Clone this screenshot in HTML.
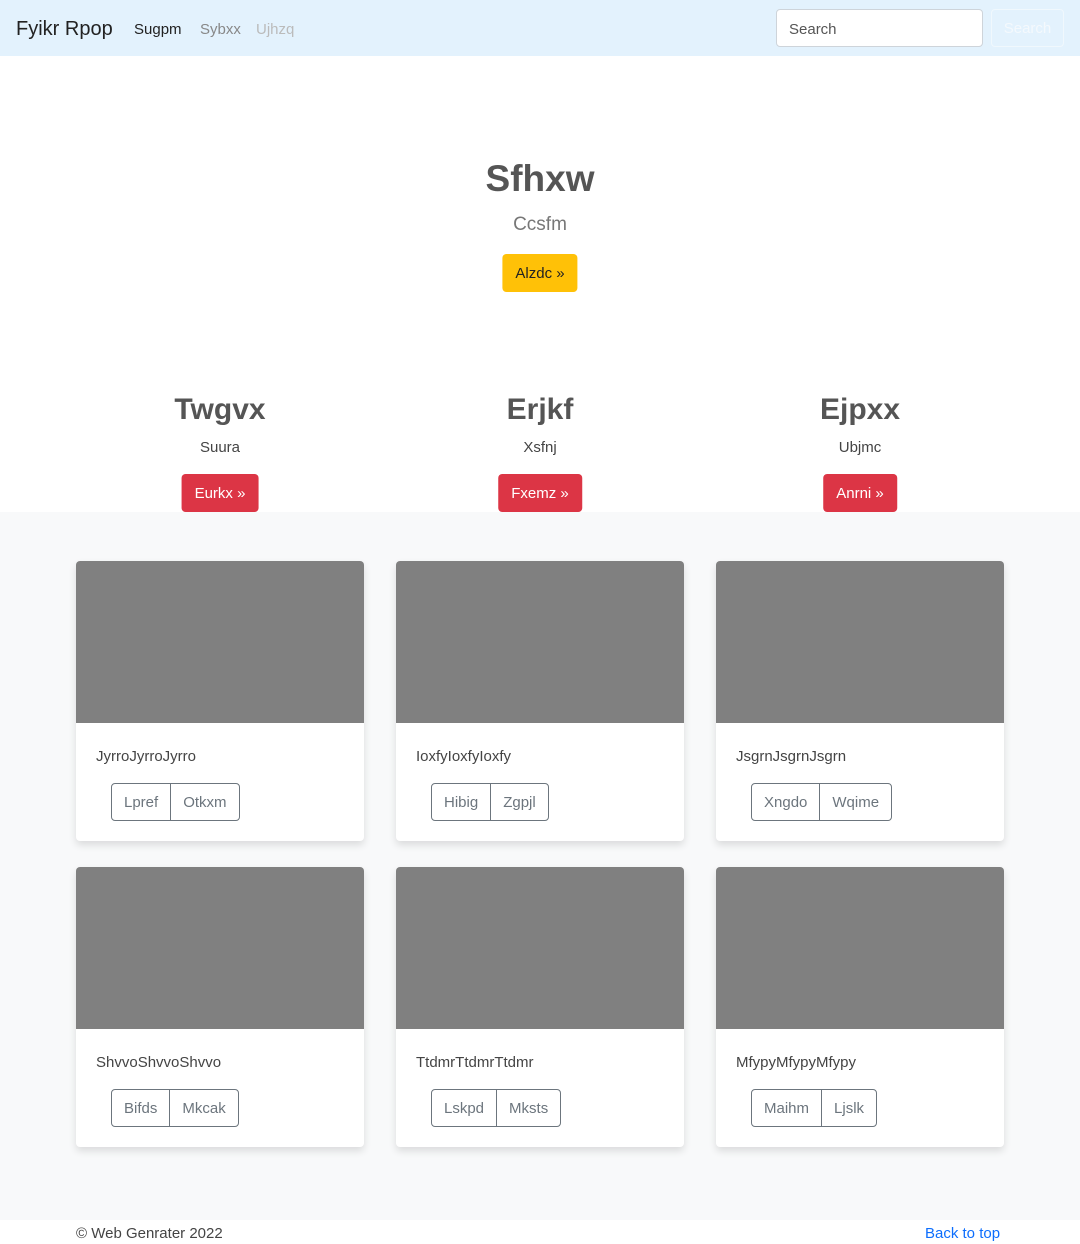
<!DOCTYPE html>
<html><head><style>
*{box-sizing:border-box;margin:0;padding:0}
body{width:1080px;height:1244px;font-family:"Liberation Sans",sans-serif;color:#212529;background:#fff;position:relative;overflow:hidden}
.nav{position:absolute;left:0;top:0;width:1080px;height:56px;background:#e3f2fd}
.abs{position:absolute;white-space:nowrap}
.c{position:absolute;transform:translateX(-50%);white-space:nowrap;text-align:center}
.btn{position:absolute;transform:translateX(-50%);height:38px;line-height:40px;padding:0 13px;border-radius:4px;font-size:15px;white-space:nowrap}
.red{background:#dc3545;color:#fff}
.gray{position:absolute;left:0;top:512px;width:1080px;height:708px;background:#f8f9fa}
.card{position:absolute;width:288px;height:280px;background:#fff;border-radius:4px;box-shadow:0 4px 8px rgba(0,0,0,.12);overflow:hidden}
.card .img{height:162px;background:#808080}
.card .t{position:absolute;left:20px;top:187px;font-size:15px;color:#444}
.grp{position:absolute;left:35px;top:222px;display:flex;border:1px solid #6c757d;border-radius:4px;height:38px}
.grp span{padding:0 12px;line-height:38px;font-size:15px;color:#6c757d}
.grp span+span{border-left:1px solid #6c757d}
</style></head><body>
<div class="nav"></div>
<div class="abs" style="left:16px;top:18px;font-size:20px;color:#222">Fyikr Rpop</div>
<div class="abs" style="left:134px;top:21px;font-size:15px;color:#222">Sugpm</div>
<div class="abs" style="left:200px;top:21px;font-size:15px;color:#888">Sybxx</div>
<div class="abs" style="left:256px;top:21px;font-size:15px;color:#bbb">Ujhzq</div>
<div class="abs" style="left:776px;top:9px;width:207px;height:38px;background:#fff;border:1px solid #ced4da;border-radius:4px;padding:0 12px;line-height:39px;font-size:15px;color:#555">Search</div>
<div class="abs" style="left:991px;top:9px;width:73px;height:38px;border:1px solid #f0f8fd;border-radius:4px;line-height:38px;text-align:center;font-size:15px;color:#f4f9fd">Search</div>

<div class="c" style="left:540px;top:158px;font-size:37px;font-weight:bold;color:#555">Sfhxw</div>
<div class="c" style="left:540px;top:214px;font-size:19px;color:#777">Ccsfm</div>
<div class="btn" style="left:540px;top:254px;background:#ffc107;color:#222">Alzdc »</div>

<div class="c" style="left:220px;top:393px;font-size:30px;font-weight:bold;color:#555">Twgvx</div>
<div class="c" style="left:540px;top:393px;font-size:30px;font-weight:bold;color:#555">Erjkf</div>
<div class="c" style="left:860px;top:393px;font-size:30px;font-weight:bold;color:#555">Ejpxx</div>
<div class="c" style="left:220px;top:439px;font-size:15px;color:#444">Suura</div>
<div class="c" style="left:540px;top:439px;font-size:15px;color:#444">Xsfnj</div>
<div class="c" style="left:860px;top:439px;font-size:15px;color:#444">Ubjmc</div>
<div class="btn red" style="left:220px;top:474px">Eurkx »</div>
<div class="btn red" style="left:540px;top:474px">Fxemz »</div>
<div class="btn red" style="left:860px;top:474px">Anrni »</div>

<div class="gray"></div>
<div class="card" style="left:76px;top:561px"><div class="img"></div><div class="t">JyrroJyrroJyrro</div><div class="grp"><span>Lpref</span><span>Otkxm</span></div></div>
<div class="card" style="left:396px;top:561px"><div class="img"></div><div class="t">IoxfyIoxfyIoxfy</div><div class="grp"><span>Hibig</span><span>Zgpjl</span></div></div>
<div class="card" style="left:716px;top:561px"><div class="img"></div><div class="t">JsgrnJsgrnJsgrn</div><div class="grp"><span>Xngdo</span><span>Wqime</span></div></div>
<div class="card" style="left:76px;top:867px"><div class="img"></div><div class="t">ShvvoShvvoShvvo</div><div class="grp"><span>Bifds</span><span>Mkcak</span></div></div>
<div class="card" style="left:396px;top:867px"><div class="img"></div><div class="t">TtdmrTtdmrTtdmr</div><div class="grp"><span>Lskpd</span><span>Mksts</span></div></div>
<div class="card" style="left:716px;top:867px"><div class="img"></div><div class="t">MfypyMfypyMfypy</div><div class="grp"><span>Maihm</span><span>Ljslk</span></div></div>

<div class="abs" style="left:76px;top:1225px;font-size:15px;color:#444">© Web Genrater 2022</div>
<div class="abs" style="left:925px;top:1225px;font-size:15px;color:#0d6efd">Back to top</div>
</body></html>
